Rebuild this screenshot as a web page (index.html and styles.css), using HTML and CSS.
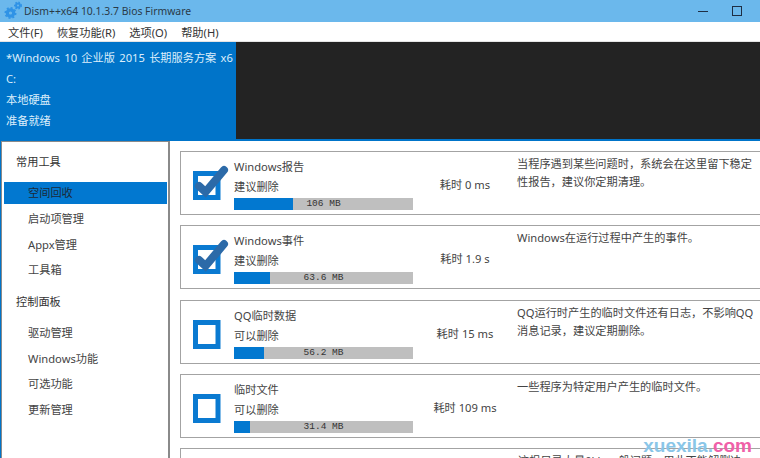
FILE: index.html
```html
<!DOCTYPE html>
<html lang="zh">
<head>
<meta charset="utf-8">
<title>Dism++</title>
<link rel="stylesheet" href="styles.css">
</head>
<body>
<div class="app">
  <header class="titlebar">
    <svg class="logo" width="20" height="20" viewBox="0 0 20 20">
      <g fill="none" stroke="#2f93e6">
        <circle cx="7.5" cy="13" r="3.2" stroke-width="3.2"/>
        <circle cx="7.5" cy="13" r="5.2" stroke-width="1.6" stroke-dasharray="2 2"/>
        <circle cx="15" cy="5.5" r="2" stroke-width="2"/>
        <circle cx="15" cy="5.5" r="3.4" stroke-width="1.2" stroke-dasharray="1.6 1.6"/>
      </g>
    </svg>
    <span class="title">Dism++x64 10.1.3.7 Bios Firmware</span>
    <span class="winbtns">
      <span class="min"></span>
      <span class="max"></span>
    </span>
  </header>
  <nav class="menu">
    <span>文件(F)</span><span>恢复功能(R)</span><span>选项(O)</span><span>帮助(H)</span>
  </nav>
  <section class="banner">
    <div class="info">
      <div>*Windows 10 企业版 2015 长期服务方案 x6</div>
      <div>C:</div>
      <div>本地硬盘</div>
      <div>准备就绪</div>
    </div>
    <div class="dark"></div>
  </section>
  <main class="body">
    <aside class="side">
      <h3>常用工具</h3>
      <a class="active">空间回收</a>
      <a>启动项管理</a>
      <a>Appx管理</a>
      <a>工具箱</a>
      <h3 class="second">控制面板</h3>
      <a>驱动管理</a>
      <a>Windows功能</a>
      <a>可选功能</a>
      <a>更新管理</a>
    </aside>
    <div class="list">
      <article class="card">
        <svg class="check" width="46" height="46" viewBox="0 0 46 46"><rect x="7.5" y="12.5" width="22.5" height="24" fill="#fff" stroke="#0a7ad1" stroke-width="5"/><path d="M11 25 L17.5 31 L36 9" fill="none" stroke="#2c6aa8" stroke-width="8" stroke-linecap="round"/></svg>
        <div class="main"><div class="name">Windows报告</div><div class="hint">建议删除</div><div class="bar"><i class="fill" style="width:33%"></i><b>106 MB</b></div></div>
        <div class="time">耗时 0 ms</div>
        <p class="desc">当程序遇到某些问题时，系统会在这里留下稳定性报告，建议你定期清理。</p>
      </article>
      <article class="card">
        <svg class="check" width="46" height="46" viewBox="0 0 46 46"><rect x="7.5" y="12.5" width="22.5" height="24" fill="#fff" stroke="#0a7ad1" stroke-width="5"/><path d="M11 25 L17.5 31 L36 9" fill="none" stroke="#2c6aa8" stroke-width="8" stroke-linecap="round"/></svg>
        <div class="main"><div class="name">Windows事件</div><div class="hint">建议删除</div><div class="bar"><i class="fill" style="width:20%"></i><b>63.6 MB</b></div></div>
        <div class="time">耗时 1.9 s</div>
        <p class="desc">Windows在运行过程中产生的事件。</p>
      </article>
      <article class="card">
        <svg class="check" width="46" height="46" viewBox="0 0 46 46"><rect x="7.5" y="12.5" width="22.5" height="24" fill="#fff" stroke="#0a7ad1" stroke-width="5"/></svg>
        <div class="main"><div class="name">QQ临时数据</div><div class="hint">可以删除</div><div class="bar"><i class="fill" style="width:17%"></i><b>56.2 MB</b></div></div>
        <div class="time">耗时 15 ms</div>
        <p class="desc">QQ运行时产生的临时文件还有日志，不影响QQ消息记录，建议定期删除。</p>
      </article>
      <article class="card">
        <svg class="check" width="46" height="46" viewBox="0 0 46 46"><rect x="7.5" y="12.5" width="22.5" height="24" fill="#fff" stroke="#0a7ad1" stroke-width="5"/></svg>
        <div class="main"><div class="name">临时文件</div><div class="hint">可以删除</div><div class="bar"><i class="fill" style="width:9%"></i><b>31.4 MB</b></div></div>
        <div class="time">耗时 109 ms</div>
        <p class="desc">一些程序为特定用户产生的临时文件。</p>
      </article>
      <article class="card">
        <div class="spacer"></div>
        <p class="desc">这根目录大量0kb 一般问题，用此不能解删决</p>
      </article>
    </div>
  </main>
  <span class="mark">xuexila.<em>com</em></span>
</div>
</body>
</html>
```

FILE: styles.css
```css
* { box-sizing: border-box; }
html, body { margin: 0; height: 100%; }
body { background: #fff; color: #3a3a3a; font: 11.2px/17px "Noto Sans", "Noto Sans CJK SC", sans-serif; }
.app { position: relative; width: 760px; height: 458px; overflow: hidden; display: flex; flex-direction: column; }

.titlebar { height: 22px; flex: none; background: #6bb8ec; display: flex; align-items: center; padding-left: 3px; color: #2a3a48; font-size: 10.4px; }
.logo { flex: none; margin-right: 1px; margin-top: -2px; }
.winbtns { margin-left: auto; display: flex; align-items: center; padding-right: 18px; gap: 24px; }
.min { width: 10px; height: 1px; background: #1e2e44; }
.max { width: 10px; height: 10px; border: 1px solid #1e2e44; }

.menu { height: 20px; flex: none; background: #fff; display: flex; gap: 14px; padding: 1px 0 0 8px; align-items: center; color: #333; border-bottom: 1px solid #e4e4e4; }

.banner { height: 99px; flex: none; background: #0074c9; display: flex; }
.info { width: 236px; padding: 5px 0 0 6px; color: #dceefb; white-space: nowrap; overflow: hidden; word-spacing: 1.4px; }
.info div { height: 21px; line-height: 21px; }
.dark { flex: 1; height: 97px; background: #232323; }

.body { flex: 1; display: flex; min-height: 0; }
.side { width: 169px; flex: none; margin-left: 1px; border: 1px solid #8a8a8a; border-width: 1px 2px 0 1px; box-shadow: -1px 0 0 #0074c9; padding-top: 10px; color: #444; }
.side h3 { margin: 0; padding-left: 14px; font-size: inherit; font-weight: normal; line-height: 20px; height: 20px; color: #333; }
.side h3.second { margin-top: 11px; margin-bottom: 10px; }
.side a { display: block; height: 22px; line-height: 22px; margin: 0 1px 3.5px 2px; padding-left: 24px; }
.side h3 + a.active { margin-top: 10px; margin-bottom: 4px; }
.side a.active { background: #0278d0; color: #1c2a38; }

.list { flex: 1; padding: 10px 0 0 10px; min-width: 0; }
.card { height: 64px; margin-bottom: 10.25px; border: 1px solid #a3a3a3; border-right: 0; display: flex; }
.check { flex: none; margin: 9px 0 0 7px; }
.main { width: 180px; padding-top: 6px; flex: none; }
.name { height: 18px; line-height: 18px; color: #444; }
.hint { height: 20px; line-height: 20px; margin-top: 1px; color: #444; }
.bar { position: relative; display: flex; justify-content: center; align-items: center; height: 12px; width: 179px; background: #bfbfbf; margin-top: 1px; }
.fill { position: absolute; left: 0; top: 0; bottom: 0; background: #0278d0; }
.bar b { position: relative; font: 9.5px/12px "Liberation Mono", monospace; color: #333; }
.time { width: 102px; flex: none; padding-top: 24px; text-align: center; color: #444; white-space: nowrap; }
.desc { margin: 0 0 0 1px; padding-top: 3px; width: 243px; flex: none; color: #444; line-height: 18px; }
.spacer { width: 336px; flex: none; }

.mark { position: absolute; right: 8px; bottom: 0; font: bold 19px/24px "Liberation Sans", sans-serif; color: #8ac6e8; }
.mark em { font-style: normal; color: #f060a8; }
```
